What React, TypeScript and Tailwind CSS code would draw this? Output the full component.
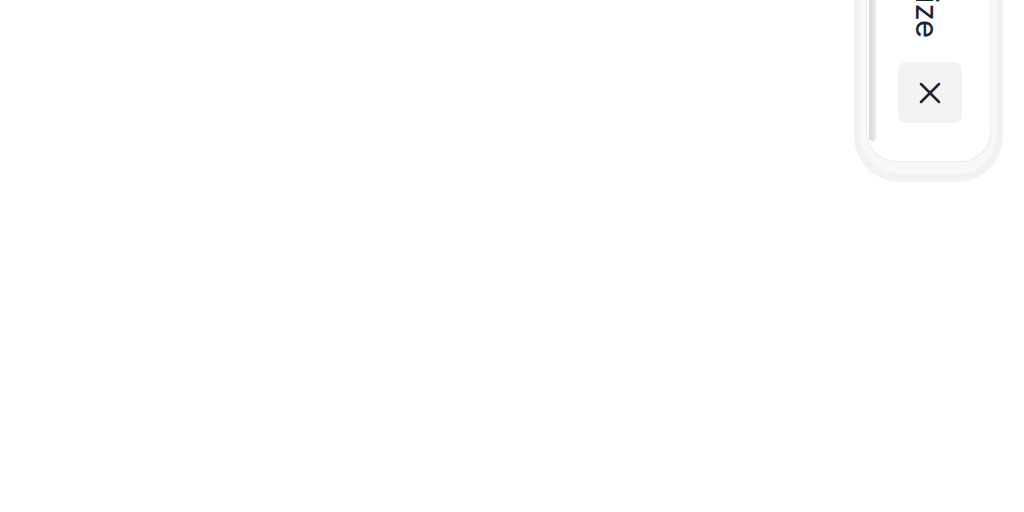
import { X } from 'lucide-react'

export default function App() {
  return (
    <div
      className="flex h-[512px] w-[1024px] items-start justify-end overflow-hidden bg-white pr-[21px]"
      style={{ fontFamily: 'Inter, "Noto Sans", sans-serif' }}
    >
      {/* panel is taller than what shows; its bottom sits at y=182 */}
      <div className="flex h-[182px] flex-col justify-end">
        <div className="rounded-b-[46px] bg-[#f2f2f2] px-[6px] pb-[8px]">
          <div className="rounded-b-[40px] bg-[#f8f8f8] px-[6px] pb-[12px]">
            <div className="flex w-[125px] rounded-b-[30px] border border-t-0 border-[#ebebeb] bg-white">
              <div className="my-[-1px] ml-[2px] w-[7px] rounded-b-full bg-gradient-to-r from-[#d6d6d6] to-[#ececec] mb-[20px]" />
              <div className="flex flex-1 flex-col items-center pb-[38px] pr-[12px]">
                <span className="text-[31px] leading-none text-[#1e2433] [writing-mode:vertical-rl]">
                  Customize
                </span>
                <button className="mt-[24px] ml-[5px] flex h-[61px] w-[64px] items-center justify-center rounded-[8px] bg-[#f3f3f3] text-[#1e2433]">
                  <X size={36} strokeWidth={1.7} />
                </button>
              </div>
            </div>
          </div>
        </div>
      </div>
    </div>
  )
}
